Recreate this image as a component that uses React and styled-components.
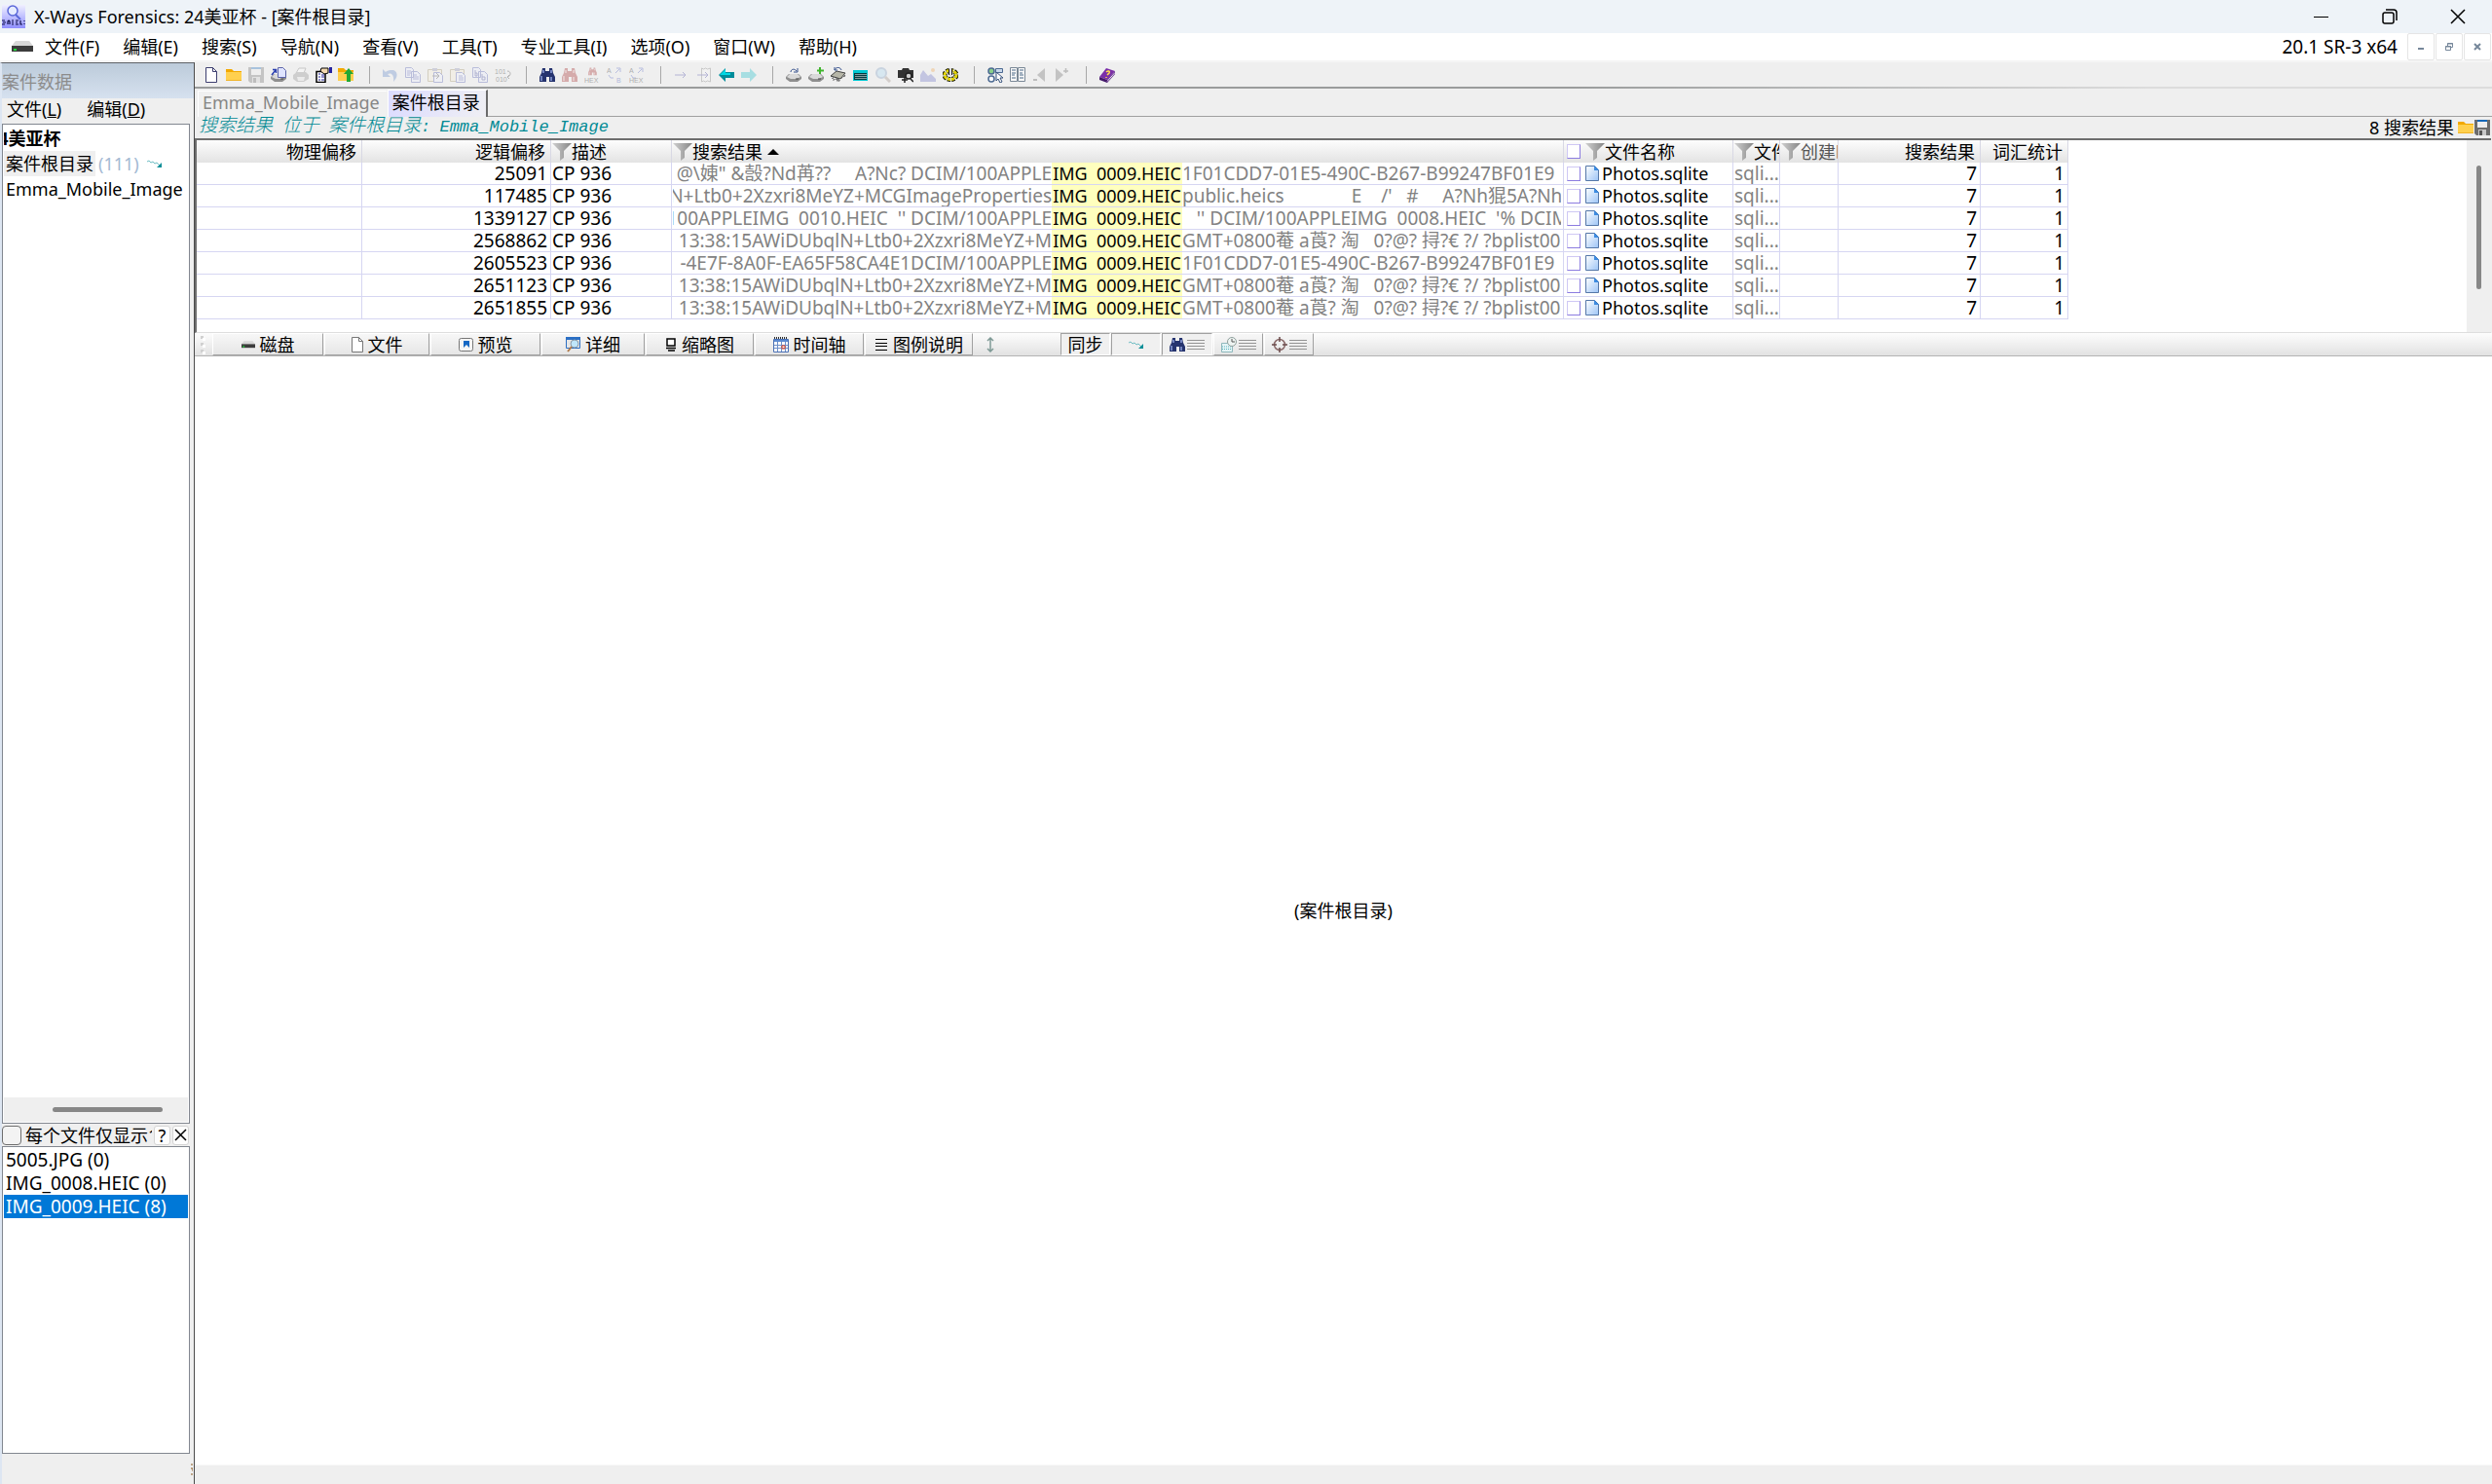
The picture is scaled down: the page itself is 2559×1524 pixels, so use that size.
import React from 'react'
import styled, { createGlobalStyle } from 'styled-components'

const GlobalStyle = createGlobalStyle`
  * { box-sizing: border-box; }
  body {
    margin: 0;
    background: #efefef;
    color: #000;
    font-family: "Noto Sans", "Noto Sans CJK SC", sans-serif;
    font-size: 18px;
    line-height: 22px;
  }
  button, input {
    font: inherit;
    color: inherit;
    margin: 0;
  }
  button {
    border: 0;
    padding: 0;
    background: none;
    white-space: nowrap;
  }
  svg { flex: none; }
`

const Shell = styled.div`
  display: flex;
  flex-direction: column;
  min-height: 100vh;
`

/* ---------- title and menu ---------- */

const TitleBar = styled.header`
  display: flex;
  align-items: center;
  height: 34px;
  padding-left: 2px;
  background: #eef3f8;
`
const Title = styled.h1`
  flex: 1;
  margin: 0 0 0 9px;
  font-size: 18px;
  font-weight: 400;
`
const WindowButton = styled.button`
  display: flex;
  align-items: center;
  justify-content: center;
  width: 70px;
  height: 34px;
`
const MenuBar = styled.nav`
  display: flex;
  align-items: center;
  height: 30px;
  padding-left: 12px;
  background: #fff;
  border-bottom: 2px solid #f5f5f5;
`
const Menus = styled.div`
  display: flex;
  flex: 1;
  gap: 24px;
  margin-left: 12px;
`
const Version = styled.span`
  margin-right: 10px;
  font-size: 19px;
`
const ChildButton = styled.button`
  display: flex;
  align-items: center;
  justify-content: center;
  width: 28px;
  height: 28px;
  margin-right: 1px;
  border: 1px solid #e5e5e5;
  border-radius: 2px;
`

/* ---------- left panel ---------- */

const Body = styled.div`
  display: flex;
  flex: 1;
`
const Side = styled.aside`
  display: flex;
  flex-direction: column;
  width: 200px;
  flex: none;
  border-top: 1px solid #5f6368;
  border-right: 1px solid #4b4b4b;
  border-left: 2px solid #dde6f2;
`
const Caption = styled.div`
  height: 36px;
  line-height: 38px;
  color: #8c8c8c;
  background: linear-gradient(#bccbda, #d6e1ef);
`
const SideMenu = styled.div`
  display: flex;
  align-items: center;
  gap: 26px;
  height: 26px;
  padding: 0 0 4px 5px;
`
const Well = styled.div`
  display: flex;
  flex-direction: column;
  margin-right: 4px;
  background: #fff;
  border: 1px solid #828790;
`
const TreeWell = styled(Well)`
  flex: 1;
  padding: 1px 1px 1px;
`
const Tree = styled.ul`
  flex: 1;
  margin: 0;
  padding: 0;
  list-style: none;
  overflow: hidden;
`
const TreeItem = styled.li`
  display: flex;
  align-items: center;
  height: 26px;
  padding-left: 2px;
  white-space: nowrap;
  font-weight: ${p => (p.$root ? 700 : 400)};
`
const RootName = styled.span`
  margin-left: -18px;
`
const Chosen = styled.span`
  margin-left: -2px;
  padding: 2px;
  background: #efefef;
`
const Count = styled.span`
  margin: 0 8px 0 3px;
  color: #a3b9d3;
`
const HTrack = styled.div`
  display: flex;
  align-items: center;
  height: 25px;
  padding-left: 50px;
  background: #efefef;
`
const HThumb = styled.div`
  width: 113px;
  height: 5px;
  border-radius: 3px;
  background: #878787;
`
const OptionRow = styled.div`
  display: flex;
  align-items: center;
  gap: 2px;
  height: 23px;
  padding-right: 5px;
`
const Tick = styled.input`
  appearance: none;
  width: 20px;
  height: 20px;
  flex: none;
  border: 1px solid #6e6e6e;
  border-radius: 4px;
  background: #f3f3f3;
`
const TickLabel = styled.label`
  flex: 1;
  margin-left: 2px;
  overflow: hidden;
  white-space: nowrap;
`
const MiniButton = styled.button`
  display: flex;
  align-items: center;
  justify-content: center;
  width: 17px;
  height: 20px;
  background: #fdfdfd;
  border: 1px solid #d4d4d4;
  border-radius: 3px;
`
const ListWell = styled(Well)`
  height: 316px;
  padding: 1px;
  font-size: 19px;
`
const Term = styled.button`
  height: 24px;
  padding-left: 2px;
  text-align: left;
  color: ${p => (p.$on ? '#fff' : '#000')};
  background: ${p => (p.$on ? '#0078d7' : 'transparent')};
`
const SideFoot = styled.div`
  display: flex;
  justify-content: flex-end;
  height: 31px;
  padding: 10px 1px;
`

/* ---------- main area ---------- */

const Main = styled.main`
  display: flex;
  flex-direction: column;
  flex: 1;
  min-width: 0;
`
const ToolBar = styled.div`
  display: flex;
  align-items: center;
  height: 27px;
  padding: 0 0 2px 9px;
  background: linear-gradient(90deg, #9a9c9c 60%, #dcdcdc 85%) bottom / 100% 2px no-repeat;
`
const ToolButton = styled.button`
  display: flex;
  width: 23px;
  height: 16px;
  opacity: ${p => (p.$off ? 0.32 : 1)};
`
const Separator = styled.span`
  width: 23px;
  height: 18px;
  &::before {
    content: '';
    display: block;
    width: 1px;
    height: 18px;
    margin-left: 9px;
    background: #a8a8a8;
  }
`
const Tabs = styled.div`
  display: flex;
  align-items: flex-end;
  height: 29px;
  padding-left: 3px;
`
const Tab = styled.button`
  height: ${p => (p.$on ? '28px' : '27px')};
  padding: 0 6px 4px 4px;
  color: ${p => (p.$on ? '#000' : '#868686')};
  background: ${p => (p.$on ? 'linear-gradient(100deg, #dcdcff, #efeff4)' : '#f0f0f0')};
  border-top: 1px solid #fff;
  border-left: 1px solid #fff;
  border-right: ${p => (p.$on ? '2px solid #6b6b6b' : '2px solid #f0f0f0')};
`
const TabLine = styled.div`
  flex: 1;
  border-bottom: 1px solid #a0a0a0;
`
const PathBar = styled.div`
  display: flex;
  align-items: center;
  height: 22px;
  padding: 0 1px 0 4px;
`
const Path = styled.span`
  flex: 1;
  padding-bottom: 2px;
  color: #008a94;
  font-family: "Liberation Mono", "Noto Sans CJK SC", monospace;
  font-size: 16px;
  font-style: italic;
  font-weight: 300;
  white-space: pre;
`
const Wide = styled.span`
  font-size: 19px;
`
const ImageName = styled.span`
  font-size: 17px;
`
const HitTotal = styled.span`
  margin-right: 4px;
`
const IconButton = styled.button`
  display: flex;
  width: 17px;
`
const GridPane = styled.div`
  display: flex;
  justify-content: space-between;
  height: 200px;
  margin-right: 1px;
  background: #fff;
  border-top: 2px solid #6e6e6e;
  border-left: 2px solid #6e6e6e;
  border-bottom: 1px solid #dedede;
`
const Grid = styled.table`
  width: 1922px;
  height: 184px;
  table-layout: fixed;
  border-collapse: separate;
  border-spacing: 0;
`
const Th = styled.th`
  height: 23px;
  padding: 0 ${p => (p.$right ? '5px' : '0')} 0 ${p => (p.$right ? '0' : '1px')};
  overflow: hidden;
  font-weight: 400;
  line-height: 22px;
  white-space: nowrap;
  text-align: ${p => (p.$right ? 'right' : 'left')};
  color: ${p => (p.$dim ? '#555' : '#000')};
  background: linear-gradient(#fdfdfd, #e3e3e3);
  border-right: 1px solid #d8d8e4;
`
const Td = styled.td`
  height: 23px;
  padding: 0 ${p => (p.$right ? '3px' : '0')} 0 ${p => (p.$right ? '0' : '1px')};
  overflow: hidden;
  vertical-align: top;
  font-size: 19px;
  line-height: 22px;
  white-space: nowrap;
  text-align: ${p => (p.$right ? 'right' : 'left')};
  color: ${p => (p.$dim ? '#828282' : '#000')};
  border-right: 1px solid #d6d6f2;
  border-bottom: 1px solid #d6d6f2;
`
const Line = styled.div`
  display: flex;
  align-items: center;
  height: 22px;
  overflow: hidden;
  white-space: pre;
`
const HitLine = styled(Line)`
  align-items: stretch;
  margin-right: 2px;
`
const FileName = styled.span`
  margin-left: 3px;
  font-size: 18px;
`
const Before = styled.span`
  display: flex;
  justify-content: flex-end;
  flex: none;
  width: 389px;
  overflow: hidden;
`
const Mark = styled.mark`
  flex: none;
  width: 134px;
  font-size: 18px;
  text-align: center;
  color: #000;
  background: #ffffbe;
`
const Box = styled.input`
  appearance: none;
  width: 14px;
  height: 15px;
  flex: none;
  margin: 0 5px 0 2px;
  background: #fff;
  border: 1px solid;
  border-color: #cfc8f4 #8c7ce0 #8c7ce0 #cfc8f4;
`
const VTrack = styled.div`
  display: flex;
  justify-content: center;
  width: 25px;
  padding-top: 26px;
  background: #efefef;
`
const VThumb = styled.div`
  width: 5px;
  height: 127px;
  border-radius: 3px;
  background: #878787;
`
const ModeBar = styled.div`
  display: flex;
  align-items: center;
  gap: 1px;
  height: 24px;
  padding-left: 4px;
  background: linear-gradient(#fdfdfd, #e2e2e2);
  border-bottom: 1px solid #b4b4b4;
`
const Grip = styled.span`
  width: 13px;
  height: 22px;
  padding-left: 2px;
`
const ModeButton = styled.button`
  display: flex;
  align-items: center;
  justify-content: center;
  gap: ${p => (p.$tight ? '2px' : '5px')};
  width: ${p => p.$w}px;
  height: 23px;
  line-height: 20px;
  background: ${p => (p.$down ? '#f0f0f0' : 'linear-gradient(#f7f7f7, #e6e6e6)')};
  border: 1px solid;
  border-color: ${p => (p.$down ? '#a0a0a0 #fff #fff #a0a0a0' : '#fff #a0a0a0 #a0a0a0 #fff')};
`
const Resizer = styled.span`
  display: flex;
  width: 88px;
  padding-left: 12px;
`
const Preview = styled.section`
  display: flex;
  flex: 1;
  align-items: center;
  justify-content: center;
  background: #fff;
`
const StatusBar = styled.footer`
  height: 20px;
  border-top: 1px solid #f8f8f8;
`

/* ---------- icons ---------- */

const Svg = ({ w = 16, h = 16, box, children }) => (
  <svg width={w} height={h} viewBox={box || `0 0 ${w} ${h}`} fill="none" aria-hidden="true">
    {children}
  </svg>
)

const AppIcon = () => (
  <Svg w={24} h={24}>
    <defs>
      <linearGradient id="app" x1="0" y1="0" x2="0" y2="1">
        <stop offset="0" stopColor="#f0f0ff" />
        <stop offset="1" stopColor="#8f8fff" />
      </linearGradient>
    </defs>
    <path d="M0 0h24v24H0z" fill="url(#app)" />
    <circle cx="11" cy="6" r="5" stroke="#5a68d8" strokeWidth="1.5" fill="#e6ecff" />
    <path d="M14 10l5 5" stroke="#5a68d8" strokeWidth="2" />
    <path d="M0 16h3M1 18h3M0 20h3M6 20v-3l1-1 1 1v3M10 16h2M10 18h2M10 20h2M14 16h3M14 18h2M14 20h3M19 16v4h2M23 16v1M23 19v1" stroke="#10104a" strokeWidth="1.2" />
  </Svg>
)

const Drive = ({ w = 22 }) => (
  <Svg w={w} h={w === 22 ? 12 : 8} box="0 0 22 12">
    <path d="M4 0h14l4 5H0z" fill="#d8d8d8" />
    <path d="M0 5h22v6H0z" fill="#3c3c3c" />
    <path d="M2 8h3v2H2z" fill="#1fdc3a" />
  </Svg>
)

const Folder = () => (
  <Svg>
    <path d="M0 2h6l2 2h8v10H0z" fill="#f2a900" />
    <path d="M0 5h16v9H0z" fill="#ffd04f" />
    <path d="M0 13h16v1H0z" fill="#f0b429" />
  </Svg>
)

const Floppy = () => (
  <Svg>
    <path d="M0 0h16v16H2l-2-2z" fill="#6d6d6d" />
    <path d="M3 0h10v2H3z" fill="#1668b8" />
    <path d="M3 2h10v6H3z" fill="#ededed" />
    <path d="M4 10h8v6H4z" fill="#c9c9c9" />
    <path d="M5 11h3v5H5z" fill="#555" />
  </Svg>
)

const Page = () => (
  <Svg w={16}>
    <path d="M2.500 .5h7l4 4v11h-11z" fill="#fff" stroke="#3d3f70" />
    <path d="M9.500 .5v4h4" stroke="#3d3f70" />
  </Svg>
)

const PlainPage = () => (
  <Svg w={12}>
    <path d="M.5 .5h7l4 4v11H.5z" fill="#fff" stroke="#777" />
    <path d="M7.500 .5v4h4" stroke="#777" />
  </Svg>
)

const DiskBase = () => (
  <>
    <path d="M0 10l3-3h10l3 3v2l-4 3H4l-4-3z" fill="#8f8f8f" />
    <path d="M1 10l3-3h8l3 3-4 2H5z" fill="#d9d9d9" />
    <path d="M10 12h3" stroke="#444" />
  </>
)

const DiskPage = () => (
  <Svg>
    <DiskBase />
    <path d="M7.500 .5h5l3 3v7h-8z" fill="#dfe4ff" stroke="#5b63a8" />
    <path d="M1 8l4-5M2 2.500h3.500V6" stroke="#2a3fb0" strokeWidth="1.500" />
  </Svg>
)

const Printer = () => (
  <Svg>
    <path d="M3 6l3-5h7l-2 5z" fill="#fff" stroke="#777" />
    <path d="M0 8l4-3h9l3 3v4l-5 3H4l-4-3z" fill="#8a8a8a" />
    <path d="M4 10h8l-1 4H5z" fill="#e5e5e5" />
  </Svg>
)

const Props = () => (
  <Svg w={17}>
    <path d="M1 4.500h9v11H1z" fill="#fff" stroke="#000" strokeWidth="1.500" />
    <path d="M3 7h2M6 8h3M3 10h2M6 10h3M3 13h2M6 13h3" stroke="#23239a" />
    <path d="M6 1h7v5l-4 1-4-3z" fill="#f3d9b0" stroke="#000" />
    <path d="M14 0h3v6h-3z" fill="#2424a0" />
  </Svg>
)

const FolderUp = () => (
  <Svg>
    <path d="M0 1h6l2 2h8v11H0z" fill="#f2a900" />
    <path d="M0 5h16v9H0z" fill="#ffd04f" />
    <path d="M9 15V7H6l5-6 5 6h-3v8z" fill="#22a834" />
  </Svg>
)

const Undo = () => (
  <Svg>
    <path d="M0 2v8h8L5 7c4-2 7 1 6 8 6-6 4-13-3-12-2 0-4 1-5 2z" fill="#5b84c8" />
  </Svg>
)

const Copy = () => (
  <Svg>
    <path d="M.5 .5h6l2 2v8h-8zM6.500 4.500h6l3 3v8h-9z" fill="#e9ecff" stroke="#4b56b0" />
    <path d="M2 4h4M2 6h4M2 8h3M8 8h4M8 10h6M8 12h6" stroke="#4b56b0" />
  </Svg>
)

const Paste = ({ arrow }) => (
  <Svg>
    <path d="M.5 2.500h14v12H.5z" fill="#f7eed6" stroke="#9a8a60" />
    <path d="M5 1h5v3H5z" fill="#8a8fb0" />
    <path d="M6.500 5.500h6l3 3v7h-9z" fill="#eef0ff" stroke="#4b56b0" />
    {arrow ? <path d="M5 9h7M9 6l3 3-3 3" stroke="#444" /> : <path d="M9 9h4M9 11h5M9 13h5" stroke="#4b56b0" />}
  </Svg>
)

const CopyBlock = () => (
  <Svg>
    <path d="M.5 .5h6l2 2v8h-8zM6.500 4.500h6l3 3v8h-9z" fill="#e9ecff" stroke="#4b56b0" />
    <path d="M3 3v6h2V6H3M10 7v6h3v-3h-3" stroke="#333a90" />
  </Svg>
)

const tiny = { fontFamily: 'Liberation Sans', fontSize: 7 }

const Binary = () => (
  <Svg w={17}>
    <text x="0" y="7" fill="#222" {...tiny}>101</text>
    <text x="1" y="15" fill="#222" {...tiny}>010</text>
    <path d="M13 4c4 0 4 5 0 6M15 8l-2 2 2 2" stroke="#333" />
  </Svg>
)

const Glasses = ({ color = '#26346f', light = '#8fa0dc' }) => (
  <>
    <path d="M3 1h3v3h4V1h3l1 5 2 4v5h-6v-5H7v5H0v-5l2-4z" fill={color} />
    <path d="M4 3v3M12 3v3M2 9v5M12 10v4" stroke={light} strokeWidth="1.500" />
  </>
)

const Binoculars = props => <Svg><Glasses {...props} /></Svg>

const HexFind = () => (
  <Svg>
    <g transform="translate(4 0) scale(.55)"><Glasses color="#a02020" light="#e0a0a0" /></g>
    <text x="0" y="16" fill="#222" {...tiny}>HEX</text>
  </Svg>
)

const Replace = ({ hex }) => (
  <Svg>
    <text x="0" y="6" fill="#222" {...tiny}>A</text>
    <path d="M9 6l4-4M10 1h4v4M2 8l2 3h3" stroke="#4657c0" />
    <text x={hex ? 0 : 10} y="16" fill={hex ? '#222' : '#2a3fb0'} {...tiny}>{hex ? 'HEX' : 'B'}</text>
  </Svg>
)

const ThinArrow = ({ page }) => (
  <Svg>
    {page && <path d="M5.500 1l2 1 2-1 2 1 3-1v14l-3-1-2 1-2-1-2 1z" fill="#fafafa" stroke="#777" />}
    <path d="M1 8h11M9 5l3 3-3 3" stroke="#3c3ca0" />
  </Svg>
)

const FatArrow = ({ right }) => (
  <Svg>
    <path d={right ? 'M16 8L9 1v4H0v6h9v4z' : 'M0 8l7-7v4h9v6H7v4z'} fill={right ? '#12bcc8' : '#008c9a'} />
    {!right && <path d="M1 8l6-6v4h5v2z" fill="#00d8e4" />}
  </Svg>
)

const DiskOpen = () => (
  <Svg>
    <DiskBase />
    <path d="M5 5c0-3 4-4 6-1M12 1v4H8" stroke="#35508c" />
  </Svg>
)
const DiskAdd = () => (
  <Svg>
    <DiskBase />
    <path d="M12 0v7M9 3.500h7" stroke="#3fb52c" strokeWidth="2" />
  </Svg>
)
const Chip = () => (
  <Svg>
    <path d="M1 9l3 5M4 8l3 6M6 8l3 7M9 7l3 5M11 6l4 4" stroke="#333" strokeWidth="2" strokeDasharray="1 1" />
    <path d="M0 9l6-5 9 2-5 6z" fill="#b6b6a8" stroke="#444" />
    <path d="M4 3c2-4 6-3 7 0M4 0v3h3" stroke="#35508c" />
  </Svg>
)
const Calc = () => (
  <Svg>
    <path d="M0 3h15v11H0z" fill="#00c8d2" />
    <path d="M1 6h13v7H1z" fill="#053b40" />
    <path d="M3 7v5M5 7v5M7 7v5M9 7v5M11 7v5M13 7v5" stroke="#fff" strokeDasharray="1 1" />
  </Svg>
)
const Lens = () => (
  <Svg>
    <circle cx="6" cy="6" r="5" fill="#a8d8f4" stroke="#7a9ac0" strokeWidth="2" />
    <path d="M10 10l5 5" stroke="#9a8a80" strokeWidth="3" />
  </Svg>
)
const Camera = () => (
  <Svg>
    <path d="M0 3h4l1-2h6l1 2h4v8H0z" fill="#333" />
    <circle cx="11" cy="9" r="3" fill="#ccc" stroke="#222" strokeWidth="1.500" />
    <path d="M7 10v6M4 13h6M13 12l3 3" stroke="#222" strokeWidth="1.500" />
  </Svg>
)
const Photo = () => (
  <Svg>
    <path d="M0 15V8l3-5 5 6 3-2 5 5v3z" fill="#6a6fc4" />
    <circle cx="13" cy="3" r="2" fill="#f0a040" />
  </Svg>
)
const Gear = () => (
  <Svg>
    <ellipse cx="8" cy="8" rx="6" ry="4.500" stroke="#1c1c00" strokeWidth="5" strokeDasharray="3 1" />
    <ellipse cx="8" cy="8" rx="6" ry="4.500" stroke="#e6d800" strokeWidth="3" strokeDasharray="3 1" />
    <path d="M8 1v8" stroke="#ddd" strokeWidth="2" />
    <path d="M6.500 2v6M9.500 2v6" stroke="#222" />
  </Svg>
)
const Choose = () => (
  <Svg>
    <circle cx="4" cy="4" r="3" stroke="#4c6a92" strokeWidth="1.500" fill="#8ad08a" />
    <circle cx="4" cy="12" r="3" stroke="#4c6a92" strokeWidth="1.500" fill="#fff" />
    <path d="M8.500 1.500h7v4h-7z" fill="#c9d8ea" stroke="#4c6a92" />
    <path d="M9 5v9l2-2 2 4 2-1-2-4h3z" fill="#fff" stroke="#35507a" />
  </Svg>
)
const Columns = () => (
  <Svg>
    <path d="M.5 .5h7v14h-7zM8.500 .5h7v14h-7z" fill="#f8f8f8" stroke="#7a8896" />
    <path d="M2 3h4M2 6h4M2 8h3M2 11h4M10 3h4M10 6h3M10 8h4M10 11h4" stroke="#4a6888" />
  </Svg>
)
const Step = ({ next }) => (
  <Svg>
    {next
      ? <><path d="M1 1l8 7-8 7z" fill="#6a6a6a" /><path d="M9 4h5M11.500 1v5" stroke="#555" strokeWidth="1.500" /></>
      : <><path d="M13 1L5 8l8 7z" fill="#6a6a6a" /><path d="M1 13h4" stroke="#555" strokeWidth="2" /></>}
  </Svg>
)
const HelpBook = () => (
  <Svg>
    <path d="M0 10L7 1l9 3-8 9z" fill="#7b2fa8" />
    <path d="M0 10l8 3v3l-8-3z" fill="#43186a" />
    <path d="M8 13l8-9v3l-8 9z" fill="#5a2480" />
    <path d="M8 14.500l8-9" stroke="#e8dcf4" />
    <path d="M7 5c2-2 4-1 3 1L8 8M7 10v1" stroke="#ffe14a" strokeWidth="1.500" />
  </Svg>
)

const Funnel = () => (
  <Svg w={20} h={18}>
    <defs>
      <linearGradient id="fun">
        <stop offset="0" stopColor="#d0d0d0" />
        <stop offset="1" stopColor="#858585" />
      </linearGradient>
    </defs>
    <path d="M0 0h20l-8 8v7l-4 3V8z" fill="url(#fun)" />
  </Svg>
)
const FileIcon = () => (
  <Svg w={14}>
    <defs>
      <linearGradient id="fil" x1="0" y1="0" x2="1" y2="1">
        <stop offset="0" stopColor="#fff" />
        <stop offset="1" stopColor="#9cc4f6" />
      </linearGradient>
    </defs>
    <path d="M.5 .5h9l4 4v11H.5z" fill="url(#fil)" stroke="#5577a8" />
    <path d="M9 0l5 5H9z" fill="#3d8be0" />
  </Svg>
)
const Squiggle = () => (
  <Svg w={16} h={8}>
    <path d="M0 2l2-1 2 2 2-1 2 2 2-1 3 3" stroke="#6cbcc2" />
    <path d="M15 3v5h-5z" fill="#0f8f98" />
  </Svg>
)
const PreviewIcon = () => (
  <Svg w={15} h={14}>
    <rect x=".5" y=".5" width="14" height="13" rx="2" fill="#f4f4f4" stroke="#777" />
    <path d="M5 3h6v7L8 7l-3 3z" fill="#1467c4" />
  </Svg>
)
const DetailIcon = () => (
  <Svg w={15}>
    <path d="M.5 1.500h14v10H.5z" fill="#e6e6e6" stroke="#2b6fc4" />
    <path d="M0 0h15v3H0z" fill="#2b6fc4" />
    <circle cx="9" cy="7" r="4" fill="#bfe6fa" stroke="#8a9aa8" />
    <path d="M6 10l-4 5" stroke="#b07a4a" strokeWidth="2" />
  </Svg>
)
const ThumbIcon = () => (
  <Svg w={12} h={14}>
    <path d="M2 1h8v7H2z" fill="#fff" stroke="#000" strokeWidth="1.500" />
    <path d="M1 10.500h10M3 13h7" stroke="#000" strokeWidth="1.500" />
  </Svg>
)
const CalendarIcon = () => (
  <Svg>
    <path d="M.5 2.500h15v13H.5z" fill="#fff" stroke="#4a70b4" />
    <path d="M1 3h14v2H1z" fill="#5b8ad0" />
    <path d="M1 8.500h14M1 11.500h14M4.500 5v10M8.500 5v10M12.500 5v10" stroke="#6d8fc8" />
    <path d="M9 9h3v3H9z" stroke="#e04020" />
    <path d="M1 1h14" stroke="#333" strokeWidth="2" strokeDasharray="1 1" />
  </Svg>
)
const ListIcon = () => (
  <Svg w={14} h={12}>
    <path d="M1 .5h12M1 4.500h12M1 7.500h12M1 11.500h12" stroke="#000" />
  </Svg>
)
const UpDown = () => (
  <Svg w={10}>
    <path d="M5 1v14M2 4l3-3 3 3M2 12l3 3 3-3" stroke="#7f9a96" strokeWidth="1.500" />
  </Svg>
)
const GreyLines = () => (
  <Svg w={18} h={12}>
    <path d="M0 1.500h18M0 4.500h18M0 7.500h18M0 10.500h18" stroke="#949494" />
  </Svg>
)
const ClockIcon = () => (
  <Svg>
    <path d="M.5 6.500h11v9H.5z" fill="#e4f4f6" stroke="#8fb8bc" />
    <path d="M1 10h10M1 12.500h10" stroke="#58b4bc" strokeDasharray="1 1" />
    <circle cx="11" cy="5" r="4.500" fill="#eef4f2" stroke="#8f9f9c" />
    <path d="M11 2v3h3" stroke="#555" />
  </Svg>
)
const TargetIcon = () => (
  <Svg>
    <circle cx="8" cy="8" r="5.500" stroke="#8a6a6a" strokeWidth="1.500" />
    <path d="M8 0v5M8 11v5M0 8h5M11 8h5" stroke="#6a4a4a" strokeWidth="1.500" />
  </Svg>
)
const GripDots = () => (
  <Svg w={8} h={22}>
    <path d="M0 2h3v3H0zM0 9h3v3H0zM0 16h3v3H0z" fill="#d0d0d0" />
    <path d="M2 4h3v3H2zM2 11h3v3H2zM2 18h3v3H2z" fill="#fff" />
  </Svg>
)
const EdgeMark = () => (
  <Svg w={2} h={12}>
    <path d="M0 1h2M0 5h2v3M0 11h2" stroke="#8a5a20" />
  </Svg>
)

/* ---------- data ---------- */

const menus = ['文件(F)', '编辑(E)', '搜索(S)', '导航(N)', '查看(V)', '工具(T)', '专业工具(I)', '选项(O)', '窗口(W)', '帮助(H)']

const tools = [
  ['新建', <Page />], ['打开', <Folder />], ['保存', <Floppy />, 1], ['镜像', <DiskPage />], ['打印', <Printer />, 1],
  ['属性', <Props />], ['打开目录', <FolderUp />], null,
  ['撤消', <Undo />, 1], ['复制', <Copy />, 1], ['写入', <Paste arrow />, 1], ['粘贴', <Paste />, 1], ['复制选块', <CopyBlock />, 1], ['转换', <Binary />, 1], null,
  ['查找', <Binoculars />], ['查找文本', <Binoculars color="#a02020" light="#e0a0a0" />, 1], ['查找十六进制', <HexFind />, 1], ['替换文本', <Replace />, 1], ['替换十六进制', <Replace hex />, 1], null,
  ['转到偏移', <ThinArrow />, 1], ['转到页', <ThinArrow page />, 1], ['后退', <FatArrow />], ['前进', <FatArrow right />, 1], null,
  ['打开磁盘', <DiskOpen />], ['克隆磁盘', <DiskAdd />], ['打开内存', <Chip />], ['计算器', <Calc />], ['放大', <Lens />, 1], ['快照', <Camera />], ['图库', <Photo />, 1], ['选项', <Gear />], null,
  ['选择', <Choose />], ['列', <Columns />], ['上一个', <Step />, 1], ['下一个', <Step next />, 1], null,
  ['帮助', <HelpBook />],
]

const widths = [170, 194, 124, 916, 174, 48, 60, 146, 90]

const HASH = '1F01CDD7-01E5-490C-B267-B99247BF01E9'
const PLIST = 'GMT+0800菴 a莨? 淘   0?@? 挦?€ ?/ ?bplist00'
const ZONE = '13:38:15AWiDUbqlN+Ltb0+2Xzxri8MeYZ+M'

const hits = [
  ['25091', '@\\娻" &嗀?Nd苒??     A?Nc? DCIM/100APPLE', HASH],
  ['117485', 'N+Ltb0+2Xzxri8MeYZ+MCGImageProperties', 'public.heics              E    /\'   #     A?Nh猑5A?Nh'],
  ['1339127', '100APPLEIMG  0010.HEIC  \'\' DCIM/100APPLE', '   \'\' DCIM/100APPLEIMG  0008.HEIC  \'% DCIM'],
  ['2568862', ZONE, PLIST],
  ['2605523', '-4E7F-8A0F-EA65F58CA4E1DCIM/100APPLE', HASH],
  ['2651123', ZONE, PLIST],
  ['2651855', ZONE, PLIST],
]

const modes = [
  ['磁盘', <Drive w={14} />, 114], ['文件', <PlainPage />, 108], ['预览', <PreviewIcon />, 113], ['详细', <DetailIcon />, 106],
  ['缩略图', <ThumbIcon />, 111], ['时间轴', <CalendarIcon />, 112], ['图例说明', <ListIcon />, 111],
]

/* ---------- parts ---------- */

const SidePanel = () => (
  <Side>
    <Caption>案件数据</Caption>
    <SideMenu>
      <button>文件(<u>L</u>)</button>
      <button>编辑(<u>D</u>)</button>
    </SideMenu>
    <TreeWell>
      <Tree>
        <TreeItem $root><RootName>24美亚杯</RootName></TreeItem>
        <TreeItem><Chosen>案件根目录</Chosen><Count>(111)</Count><Squiggle /></TreeItem>
        <TreeItem>Emma_Mobile_Image</TreeItem>
      </Tree>
      <HTrack><HThumb /></HTrack>
    </TreeWell>
    <OptionRow>
      <Tick type="checkbox" id="once" />
      <TickLabel htmlFor="once">每个文件仅显示1</TickLabel>
      <MiniButton>?</MiniButton>
      <MiniButton aria-label="关闭">
        <Svg w={13} h={13}><path d="M1 1l11 11M12 1L1 12" stroke="#000" strokeWidth="1.500" /></Svg>
      </MiniButton>
    </OptionRow>
    <ListWell>
      <Term>5005.JPG (0)</Term>
      <Term>IMG_0008.HEIC (0)</Term>
      <Term $on>IMG_0009.HEIC (8)</Term>
    </ListWell>
    <SideFoot><EdgeMark /></SideFoot>
  </Side>
)

const HitGrid = () => (
  <Grid>
    <colgroup>{widths.map((w, i) => <col key={i} width={w} />)}</colgroup>
    <thead>
      <tr>
        <Th $right>物理偏移</Th>
        <Th $right>逻辑偏移</Th>
        <Th><Line><Funnel />描述</Line></Th>
        <Th><Line><Funnel />搜索结果 <Svg w={12} h={6}><path d="M6 0l6 6H0z" fill="#000" /></Svg></Line></Th>
        <Th><Line><Box type="checkbox" aria-label="全选" /><Funnel />文件名称</Line></Th>
        <Th><Line><Funnel />文件类型</Line></Th>
        <Th $dim><Line><Funnel />创建时间</Line></Th>
        <Th $right>搜索结果</Th>
        <Th $right>词汇统计</Th>
      </tr>
    </thead>
    <tbody>
      {hits.map(([offset, before, after]) => (
        <tr key={offset}>
          <Td />
          <Td $right>{offset}</Td>
          <Td>CP 936</Td>
          <Td $dim>
            <HitLine><Before><span>{before}</span></Before><Mark>IMG  0009.HEIC</Mark><span>{after}</span></HitLine>
          </Td>
          <Td>
            <Line><Box type="checkbox" aria-label={offset} /><FileIcon /><FileName>Photos.sqlite</FileName></Line>
          </Td>
          <Td $dim>sqli...</Td>
          <Td />
          <Td $right>7</Td>
          <Td $right>1</Td>
        </tr>
      ))}
    </tbody>
  </Grid>
)

const App = () => {
  return (
    <Shell>
      <GlobalStyle />
      <TitleBar>
        <AppIcon />
        <Title>X-Ways Forensics: 24美亚杯 - [案件根目录]</Title>
        <WindowButton aria-label="最小化"><Svg><path d="M0 8.500h15" stroke="#000" /></Svg></WindowButton>
        <WindowButton aria-label="还原">
          <Svg>
            <rect x="1" y="4" width="11" height="11" rx="2" stroke="#000" strokeWidth="1.500" />
            <path d="M4 1h8a3 3 0 013 3v8" stroke="#000" strokeWidth="1.500" />
          </Svg>
        </WindowButton>
        <WindowButton aria-label="关闭"><Svg><path d="M1 1l14 14M15 1L1 15" stroke="#000" strokeWidth="1.500" /></Svg></WindowButton>
      </TitleBar>
      <MenuBar>
        <Drive />
        <Menus>{menus.map(m => <button key={m}>{m}</button>)}</Menus>
        <Version>20.1 SR-3 x64</Version>
        <ChildButton aria-label="最小化窗口"><Svg w={8} h={8}><path d="M1 6h6" stroke="#76879a" strokeWidth="2" /></Svg></ChildButton>
        <ChildButton aria-label="还原窗口">
          <Svg w={8} h={8}><path d="M.5 3.500h5v4h-5zM2.500 3V.5h5v4H6M0 4h6M2 1h6" stroke="#76879a" /></Svg>
        </ChildButton>
        <ChildButton aria-label="关闭窗口"><Svg w={8} h={8}><path d="M1 1l6 6M7 1L1 7" stroke="#76879a" strokeWidth="2" /></Svg></ChildButton>
      </MenuBar>
      <Body>
        <SidePanel />
        <Main>
          <ToolBar>
            {tools.map((t, i) => t ? <ToolButton key={i} aria-label={t[0]} $off={t[2]}>{t[1]}</ToolButton> : <Separator key={i} />)}
          </ToolBar>
          <Tabs>
            <Tab>Emma_Mobile_Image</Tab>
            <Tab $on>案件根目录</Tab>
            <TabLine />
          </Tabs>
          <PathBar>
            <Path><Wide>搜索结果</Wide> <Wide>位于</Wide> <Wide>案件根目录</Wide>: <ImageName>Emma_Mobile_Image</ImageName></Path>
            <HitTotal>8 搜索结果</HitTotal>
            <IconButton aria-label="打开"><Folder /></IconButton>
            <IconButton aria-label="保存"><Floppy /></IconButton>
          </PathBar>
          <GridPane>
            <HitGrid />
            <VTrack><VThumb /></VTrack>
          </GridPane>
          <ModeBar>
            <Grip><GripDots /></Grip>
            {modes.map(([name, icon, w]) => <ModeButton key={name} $w={w}>{icon}{name}</ModeButton>)}
            <Resizer><UpDown /></Resizer>
            <ModeButton $w={51} $down>同步</ModeButton>
            <ModeButton $w={51} $down aria-label="浏览"><Squiggle /></ModeButton>
            <ModeButton $w={52} $down $tight aria-label="搜索列表"><Binoculars /><GreyLines /></ModeButton>
            <ModeButton $w={51} $tight aria-label="事件列表"><ClockIcon /><GreyLines /></ModeButton>
            <ModeButton $w={51} $tight aria-label="位置列表"><TargetIcon /><GreyLines /></ModeButton>
          </ModeBar>
          <Preview>(案件根目录)</Preview>
          <StatusBar />
        </Main>
      </Body>
    </Shell>
  )
}

export default App
